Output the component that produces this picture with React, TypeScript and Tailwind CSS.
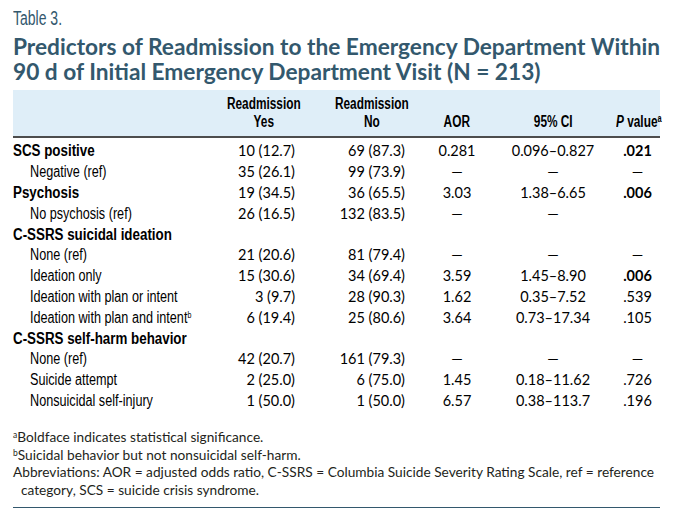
const lato = "font-['Lato','Liberation_Sans',sans-serif]";
const arial = "font-['Liberation_Sans','Arial',sans-serif]";

type Row = {
  label: string;
  sup?: string;
  group?: boolean;
  yes?: string;
  no?: string;
  aor?: string;
  ci?: string;
  p?: string;
  sig?: boolean;
};

const rows: Row[] = [
  { label: "SCS positive", group: true, yes: "10 (12.7)", no: "69 (87.3)", aor: "0.281", ci: "0.096–0.827", p: ".021", sig: true },
  { label: "Negative (ref)", yes: "35 (26.1)", no: "99 (73.9)", aor: "—", ci: "—", p: "—" },
  { label: "Psychosis", group: true, yes: "19 (34.5)", no: "36 (65.5)", aor: "3.03", ci: "1.38–6.65", p: ".006", sig: true },
  { label: "No psychosis (ref)", yes: "26 (16.5)", no: "132 (83.5)", aor: "—", ci: "—" },
  { label: "C-SSRS suicidal ideation", group: true },
  { label: "None (ref)", yes: "21 (20.6)", no: "81 (79.4)", aor: "—", ci: "—", p: "—" },
  { label: "Ideation only", yes: "15 (30.6)", no: "34 (69.4)", aor: "3.59", ci: "1.45–8.90", p: ".006", sig: true },
  { label: "Ideation with plan or intent", yes: "3 (9.7)", no: "28 (90.3)", aor: "1.62", ci: "0.35–7.52", p: ".539" },
  { label: "Ideation with plan and intent", sup: "b", yes: "6 (19.4)", no: "25 (80.6)", aor: "3.64", ci: "0.73–17.34", p: ".105" },
  { label: "C-SSRS self-harm behavior", group: true },
  { label: "None (ref)", yes: "42 (20.7)", no: "161 (79.3)", aor: "—", ci: "—", p: "—" },
  { label: "Suicide attempt", yes: "2 (25.0)", no: "6 (75.0)", aor: "1.45", ci: "0.18–11.62", p: ".726" },
  { label: "Nonsuicidal self-injury", yes: "1 (50.0)", no: "1 (50.0)", aor: "6.57", ci: "0.38–113.7", p: ".196" },
];

const grid = "grid grid-cols-[212px_77px_109px_78px_112px_67px]";

// condensed header cell: Arial scaled horizontally to mimic a condensed face
function Head({ children, className = "" }: { children: React.ReactNode; className?: string }) {
  return (
    <div className={`flex justify-center text-center ${className}`}>
      <span className="inline-block shrink-0 scale-x-[0.74] whitespace-nowrap">{children}</span>
    </div>
  );
}

export default function App() {
  return (
    <div className="w-[673px] h-[517px] bg-white px-[13px] pt-[7px] text-black">
      {/* Caption */}
      <div className={`${arial} text-[20px] leading-[23px] text-[#33586d]`}>
        <span className="inline-block origin-left scale-x-[0.7]">Table 3.</span>
      </div>
      <h1 className={`${lato} mt-[4px] text-[22.7px] font-bold leading-[25px] text-[#33586d] whitespace-nowrap`}>
        Predictors of Readmission to the Emergency Department Within
        <br />
        90 d of Initial Emergency Department Visit (N = 213)
      </h1>

      {/* Header */}
      <div className={`${grid} ${arial} mt-[6px] h-[48px] items-center bg-[#dfeef8] border-b-2 border-[#4d4d4d] text-[16px] font-bold leading-[18px]`}>
        <div />
        <Head>Readmission<br />Yes</Head>
        <Head className="pl-[31px]">Readmission<br />No</Head>
        <Head className="pl-[14px] pt-[18px]">AOR</Head>
        <Head className="pl-[16px] pt-[18px]">95% CI</Head>
        <Head className="pl-[8px] pt-[18px]">
          <i>P</i> value<sup className="text-[10px]">a</sup>
        </Head>
      </div>

      {/* Body */}
      <div className="pt-[3px]">
        {rows.map((r, i) => (
          <div key={i} className={`${grid} h-[20.8px] items-center text-[14.5px] leading-[20px]`}>
            <div className={`${arial} text-[16px] ${r.group ? "font-bold" : "pl-[17px]"}`}>
              <span className={`inline-block origin-left whitespace-nowrap ${r.group ? "scale-x-[0.835]" : "scale-x-[0.79]"}`}>
                {r.label}
                {r.sup && <sup className="text-[9px]">{r.sup}</sup>}
              </span>
            </div>
            <div className={`${lato} pr-[7px] text-right`}>{r.yes}</div>
            <div className={`${lato} pr-[6px] text-right`}>{r.no}</div>
            <div className={`${lato} pl-[14px] text-center`}>{r.aor}</div>
            <div className={`${lato} pl-[16px] text-center`}>{r.ci}</div>
            <div className={`${lato} pl-[6px] text-center ${r.sig ? "font-bold" : ""}`}>{r.p}</div>
          </div>
        ))}
      </div>

      {/* Footnotes */}
      <div className={`${lato} mt-[17px] border-b border-[#33586d] pb-[9px] text-[13.7px] leading-[17.5px] text-[#231f20] whitespace-nowrap`}>
        <p><sup className="text-[8.5px]">a</sup>Boldface indicates statistical significance.</p>
        <p><sup className="text-[8.5px]">b</sup>Suicidal behavior but not nonsuicidal self-harm.</p>
        <p>Abbreviations: AOR = adjusted odds ratio, C-SSRS = Columbia Suicide Severity Rating Scale, ref = reference</p>
        <p className="pl-[8px]">category, SCS = suicide crisis syndrome.</p>
      </div>
    </div>
  );
}
